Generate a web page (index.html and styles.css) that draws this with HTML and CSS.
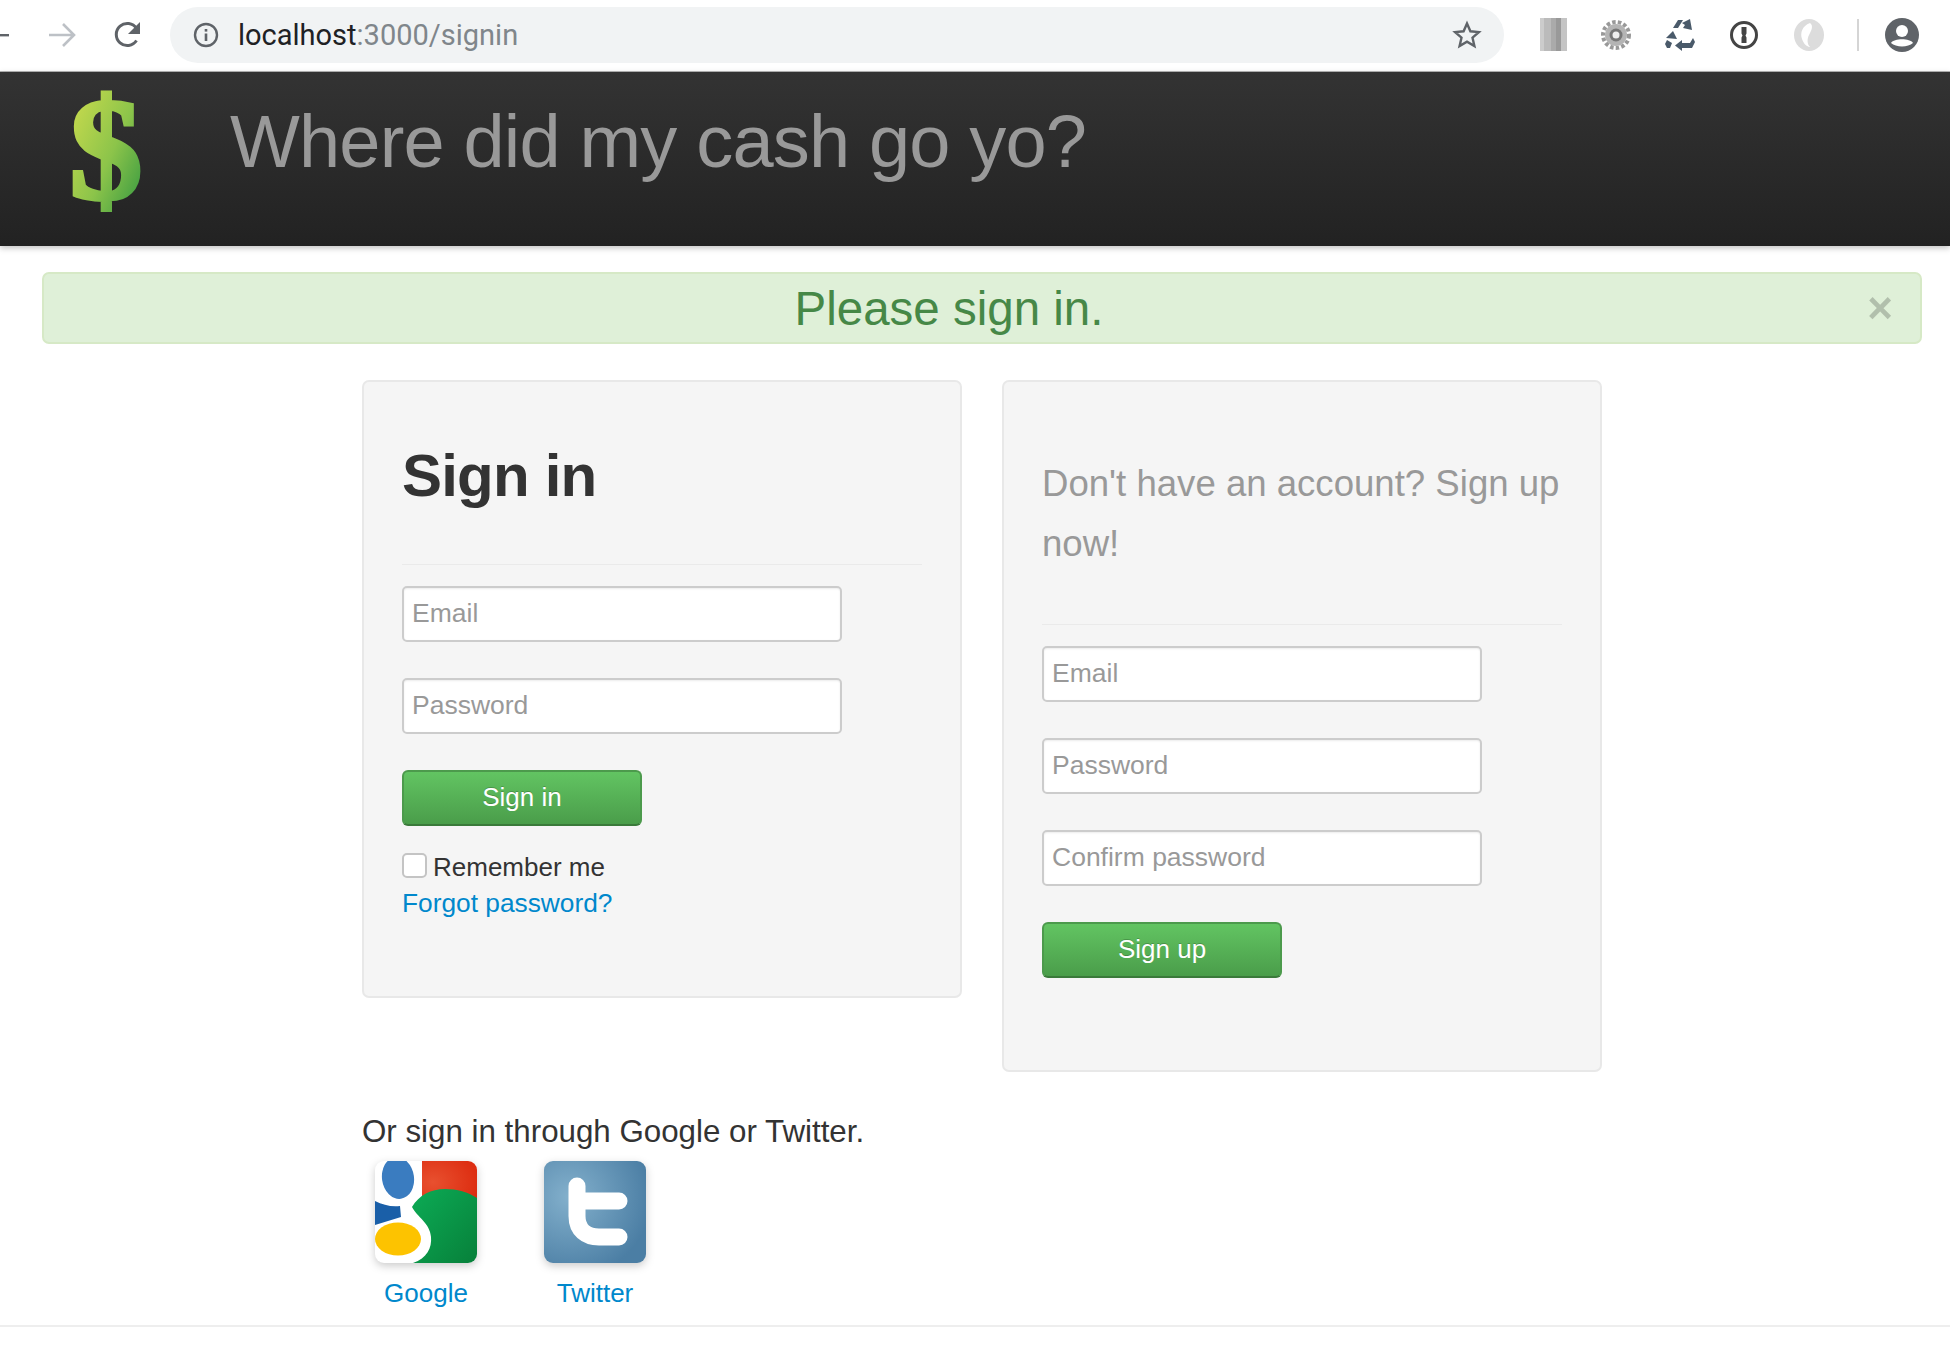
FILE: index.html
```html
<!DOCTYPE html>
<html lang="en">
<head>
    <meta charset="UTF-8">
    <title>Where did my cash go yo?</title>
    <link rel="stylesheet" href="styles.css">
</head>
<body>
    <div class="toolbar">
        <div class="nav-btns">
            <svg class="back" width="12" height="4" viewBox="0 0 12 4"><rect width="9" height="2.4" y="1" fill="#5f6368"/></svg>
            <svg class="fwd" width="28" height="30" viewBox="0 0 28 30"><path d="M1 15h25M15 4l11 11-11 11" fill="none" stroke="#bdc1c6" stroke-width="2.6"/></svg>
            <svg class="reload" width="28" height="32" viewBox="0 0 28 32"><path d="M23.500 21.500a11 11 0 1 1 0-12" fill="none" stroke="#5f6368" stroke-width="3"/><path d="M27 3v12H15z" fill="#5f6368"/></svg>
        </div>
        <div class="omnibox">
            <svg width="26" height="26" viewBox="0 0 26 26"><circle cx="13" cy="13" r="11" fill="none" stroke="#5f6368" stroke-width="2.4"/><rect x="11.700" y="11.500" width="2.600" height="7.500" fill="#5f6368"/><rect x="11.700" y="7" width="2.600" height="2.600" fill="#5f6368"/></svg>
            <span class="url"><b>localhost</b>:3000/signin</span>
            <svg class="star" width="30" height="30" viewBox="0 0 30 30"><path d="M15 3.500l3.400 7.800 8.500.8-6.400 5.600 1.900 8.300-7.400-4.400-7.400 4.400 1.900-8.300-6.400-5.600 8.500-.8z" fill="none" stroke="#5f6368" stroke-width="2.400"/></svg>
        </div>
        <div class="exts">
            <div class="ext-bars"></div>
            <svg width="30" height="32" viewBox="0 0 30 32"><circle cx="15" cy="16" r="13" fill="none" stroke="#999" stroke-width="4" stroke-dasharray="3.500 2.200"/><circle cx="15" cy="16" r="11" fill="#b4b4b4"/><circle cx="15" cy="16" r="6.500" fill="#777"/><circle cx="15" cy="16" r="3.500" fill="#eee"/></svg>
            <svg width="30" height="32" viewBox="0 0 30 32"><g fill="#4a5a6a"><path d="M8 9l5-8h5l-5 8z"/><path d="M17 4l8-4 2 11-9-2 2-3z"/><path d="M1 19l7-7 4 8z"/><path d="M2 21l5 3-2 5H2l-2-4z"/><path d="M17 21v11l-7-5.500z"/><path d="M17 24h8l3-5 2 4-3 6H17z"/></g></svg>
            <svg width="30" height="30" viewBox="0 0 30 30"><circle cx="15" cy="15" r="12.500" fill="none" stroke="#444" stroke-width="3"/><path d="M12.500 7h5v6.500l-1 2 1 2V23h-5v-5.500l1-2-1-2z" fill="#444"/></svg>
            <svg width="32" height="34" viewBox="0 0 32 34"><ellipse cx="16" cy="17" rx="15" ry="16" fill="#dcdcdc"/><path d="M17 5c-8 3-10 10-8 16s6 8 8 8c-3-3-3-8-1-12s5-9 1-12z" fill="#fff"/></svg>
            <div class="ext-sep"></div>
            <svg class="avatar" width="34" height="34" viewBox="0 0 34 34"><circle cx="17" cy="17" r="17" fill="#5f6368"/><circle cx="17" cy="13" r="6" fill="#fff"/><path d="M6 25c3-5 19-5 22 0-5 4.500-17 4.500-22 0z" fill="#fff"/></svg>
        </div>
    </div>

    <div class="navbar">
        <svg class="logo" width="100" height="174" viewBox="0 0 100 174">
            <defs>
                <linearGradient id="cash" x1="0" y1="0" x2="1" y2="1">
                    <stop offset="0" stop-color="#d8e04e"/>
                    <stop offset=".55" stop-color="#8cc44a"/>
                    <stop offset="1" stop-color="#25903f"/>
                </linearGradient>
            </defs>
            <text x="50" y="127" text-anchor="middle" class="logo-text" fill="url(#cash)" stroke="url(#cash)">$</text>
        </svg>
        <span class="brand">Where did my cash go yo?</span>
    </div>

    <div class="alert">
        <span>Please sign in.</span>
        <span class="close">×</span>
    </div>

    <div class="main">
        <div class="panels">
            <form class="well">
                <div class="page-header">
                    <h1>Sign in</h1>
                </div>
                <input class="field" type="text" placeholder="Email">
                <input class="field" type="text" placeholder="Password">
                <button class="btn" type="button">Sign in</button>
                <label class="remember"><input type="checkbox"><span>Remember me</span></label>
                <a class="forgot" href="#">Forgot password?</a>
            </form>
            <form class="well well-signup">
                <div class="page-header">
                    <h2>Don't have an account? Sign up now!</h2>
                </div>
                <input class="field" type="text" placeholder="Email">
                <input class="field" type="text" placeholder="Password">
                <input class="field" type="text" placeholder="Confirm password">
                <button class="btn" type="button">Sign up</button>
            </form>
        </div>
        <p class="or">Or sign in through Google or Twitter.</p>
        <div class="providers">
            <a class="provider" href="#">
                <svg width="102" height="102" viewBox="0 0 102 102">
                    <defs>
                        <clipPath id="gclip"><rect width="102" height="102" rx="9"/></clipPath>
                        <radialGradient id="gred" cx=".2" cy=".5" r=".9"><stop offset="0" stop-color="#e8502f"/><stop offset="1" stop-color="#dc2a0e"/></radialGradient>
                        <linearGradient id="ggreen" x1="0" y1="0" x2="1" y2="1"><stop offset="0" stop-color="#0cab55"/><stop offset="1" stop-color="#07803a"/></linearGradient>
                    </defs>
                    <g clip-path="url(#gclip)">
                        <rect width="102" height="102" fill="#fff"/>
                        <rect x="47" width="55" height="42" fill="url(#gred)"/>
                        <path d="M37 46C44 34 56 28 70 28c12 0 23 3 32 9v65H38c14-5 19-15 18-26-1-14-14-20-19-30z" fill="url(#ggreen)"/>
                        <path d="M0 40c8 4 16 6 25 5l1 11-26 8z" fill="#1a5fa8"/>
                        <ellipse cx="23" cy="17" rx="16" ry="21" fill="#3a7cc0" transform="rotate(-8 23 17)"/>
                        <ellipse cx="23" cy="78" rx="23" ry="16.500" fill="#fdc300"/>
                    </g>
                </svg>
                <span>Google</span>
            </a>
            <a class="provider" href="#">
                <svg width="102" height="102" viewBox="0 0 102 102">
                    <defs>
                        <radialGradient id="tblue" cx=".25" cy=".35" r=".8"><stop offset="0" stop-color="#83b0cc"/><stop offset="1" stop-color="#4b7ea4"/></radialGradient>
                    </defs>
                    <rect width="102" height="102" rx="9" fill="url(#tblue)"/>
                    <path d="M33 25v30c0 14 9 21 22 21h20M33 40h42" fill="none" stroke="#fff" stroke-width="17" stroke-linecap="round"/>
                </svg>
                <span>Twitter</span>
            </a>
        </div>
    </div>
    <div class="footer-rule"></div>
</body>
</html>
```

FILE: styles.css
```css
* {
    box-sizing: border-box;
    margin: 0;
    padding: 0;
}

body {
    font-family: "Liberation Sans", Arial, sans-serif;
    font-size: 26px;
    color: #333;
    background-color: #fff;
    height: 1354px;
    overflow: hidden;
}

a {
    color: #0088cc;
    text-decoration: none;
}

.toolbar {
    display: flex;
    align-items: center;
    height: 72px;
    padding-bottom: 2px;
    border-bottom: 1px solid #b5b5b5;
}

.nav-btns {
    display: flex;
    align-items: center;
    width: 170px;
    flex: none;
}

.back {
    margin-right: 36px;
}

.fwd {
    margin-right: 37px;
}

.omnibox {
    display: flex;
    align-items: center;
    width: 1334px;
    height: 56px;
    padding: 0 22px 0 23px;
    margin-right: 36px;
    flex: none;
    border-radius: 28px;
    background-color: #f1f3f4;
}

.url {
    margin-left: 19px;
    font-family: Roboto, "Liberation Sans", sans-serif;
    font-size: 29px;
    color: #80868b;
    flex: 1;
}

.url b {
    font-weight: 400;
    color: #202124;
}

.exts {
    display: flex;
    align-items: center;
    gap: 34px;
}

.ext-bars {
    width: 27px;
    height: 33px;
    background: linear-gradient(90deg, #ccc 0 14%, #bbb 14% 40%, #aaa 40% 60%, #999 60% 78%, #c4c4c4 78%);
}

.ext-sep {
    width: 2px;
    height: 32px;
    margin-left: -2px;
    background-color: #d5d5d5;
}

.avatar {
    margin-left: -8px;
}

.navbar {
    display: flex;
    align-items: flex-start;
    height: 174px;
    padding-left: 56px;
    background: linear-gradient(#333, #222);
    box-shadow: 0 2px 6px rgba(0, 0, 0, .25);
}

.logo {
    overflow: visible;
}

.logo-text {
    font-family: "Liberation Serif", serif;
    font-weight: 700;
    font-size: 146px;
    stroke-width: 4px;
}

.brand {
    margin: 28px 0 0 74px;
    font-size: 74px;
    line-height: 84px;
    letter-spacing: -.83px;
    color: #999;
}

.alert {
    display: flex;
    justify-content: center;
    align-items: center;
    position: relative;
    height: 72px;
    margin: 26px 28px 0 42px;
    padding: 1px 66px 0 0;
    border: 2px solid #d6e9c6;
    border-radius: 7px;
    background-color: #dff0d8;
    font-size: 47.500px;
    color: #468847;
}

.close {
    position: absolute;
    right: 27px;
    top: 50%;
    transform: translateY(-50%);
    font-size: 44px;
    font-weight: 700;
    color: #000;
    opacity: .2;
}

.main {
    padding: 36px 0 0 362px;
}

.panels {
    display: flex;
    align-items: flex-start;
    gap: 40px;
}

.well {
    display: flex;
    flex-direction: column;
    align-items: flex-start;
    width: 600px;
    height: 618px;
    padding: 38px;
    border: 2px solid #e8e8e8;
    border-radius: 7px;
    background-color: #f5f5f5;
}

.well-signup {
    height: 692px;
}

.page-header {
    width: 100%;
    height: 145px;
    margin-bottom: 21px;
    border-bottom: 1px solid #eaeaea;
}

.well-signup .page-header {
    height: 205px;
}

h1 {
    padding-top: 21px;
    font-size: 60px;
    line-height: 70px;
    letter-spacing: -.8px;
    color: #333;
}

h2 {
    padding-top: 34px;
    font-size: 36.600px;
    font-weight: 400;
    line-height: 60px;
    color: #999;
}

.field {
    width: 440px;
    height: 56px;
    padding: 0 8px 2px;
    margin-bottom: 36px;
    border: 2px solid #ccc;
    border-radius: 5px;
    background-color: #fff;
    font-family: inherit;
    font-size: 26.500px;
    box-shadow: inset 0 1px 2px rgba(0, 0, 0, .08);
}

.field::placeholder {
    color: #999;
    opacity: 1;
}

.btn {
    width: 240px;
    height: 56px;
    padding-bottom: 2px;
    border: 2px solid #4c9a4c;
    border-bottom-color: #3a7a3a;
    border-radius: 6px;
    background: linear-gradient(#62c462, #4a9d4a);
    font-family: inherit;
    font-size: 26px;
    color: #fff;
    text-shadow: 0 -1px 0 rgba(0, 0, 0, .2);
}

.remember {
    display: flex;
    align-items: center;
    margin-top: 25px;
    line-height: 32px;
}

.remember input {
    appearance: none;
    width: 25px;
    height: 25px;
    margin: 0 6px 4px 0;
    border: 2px solid #c4c4c4;
    border-radius: 5px;
    background-color: #fff;
}

.forgot {
    margin-top: 2px;
    font-size: 26.300px;
    line-height: 36px;
}

.or {
    margin-top: 40px;
    font-size: 31.300px;
    line-height: 40px;
}

.providers {
    display: flex;
    gap: 67px;
    margin: 9px 0 0 13px;
}

.provider {
    display: flex;
    flex-direction: column;
    align-items: center;
    width: 102px;
    font-size: 26px;
    line-height: 36px;
}

.provider svg {
    margin-bottom: 12px;
    filter: drop-shadow(0 3px 4px rgba(0, 0, 0, .2));
}

.footer-rule {
    margin-top: 14px;
    height: 2px;
    background-color: #eee;
}
```
